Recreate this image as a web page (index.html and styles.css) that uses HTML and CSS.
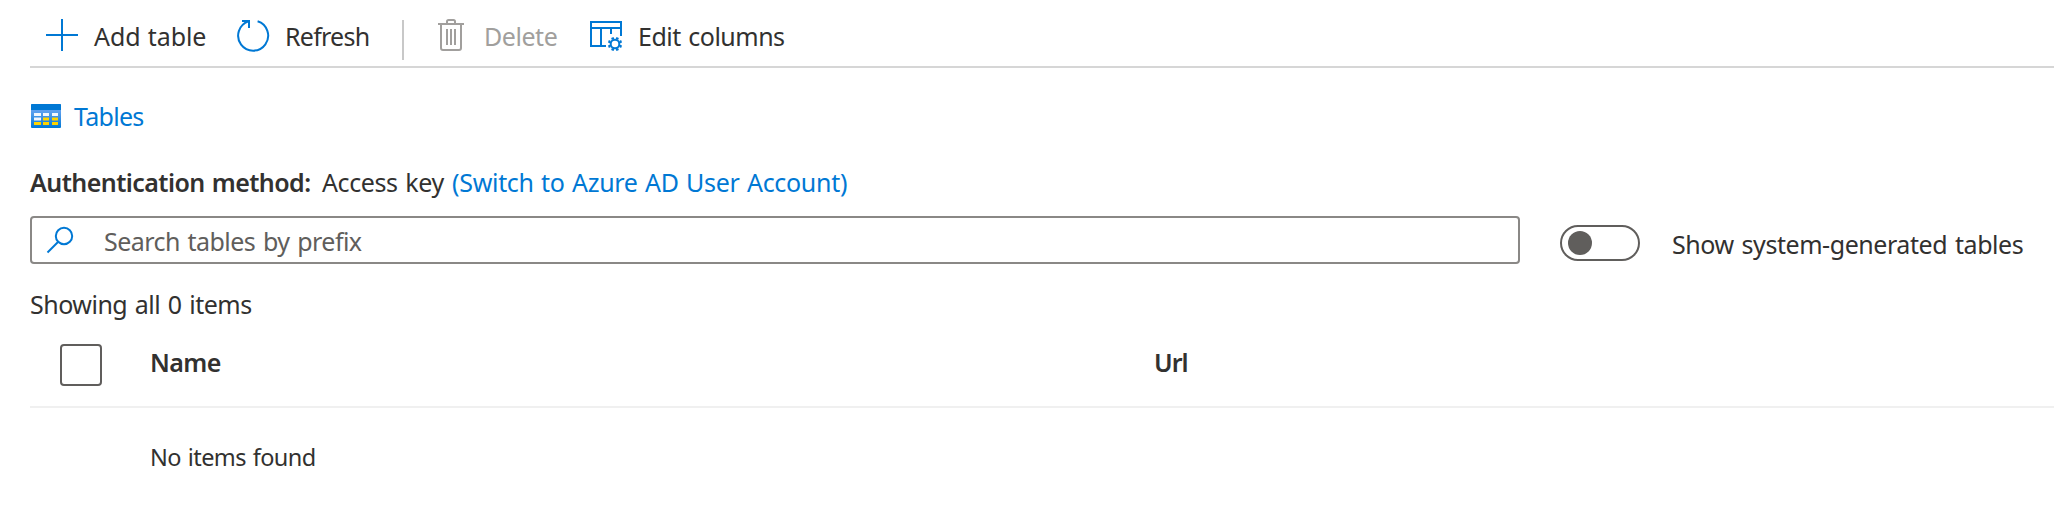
FILE: index.html
```
<!DOCTYPE html>
<html lang="en">
<head>
<meta charset="utf-8">
<title>Tables</title>
<link rel="stylesheet" href="styles.css">
</head>
<body>
<main class="page">
  <nav class="toolbar">
    <button class="command command-add">
      <svg class="icon" width="32" height="32" viewBox="0 0 32 32"><path d="M16 0v32M0 16h32"/></svg>
      <span class="label-add">Add table</span>
    </button>
    <button class="command command-refresh">
      <svg class="icon" width="34" height="34" viewBox="0 0 34 34"><path d="M20.6 2.3A15 15 0 1 1 11.4 2.4M5 2h7v7"/></svg>
      <span class="label-refresh">Refresh</span>
    </button>
    <span class="separator"></span>
    <button class="command command-delete" disabled>
      <svg class="icon" width="26" height="32" viewBox="0 0 26 32"><path d="M0 5h26M9 5V2.5Q9 1 10.500 1h5Q17 1 17 2.500V5M3 5v24q0 2 2 2h16q2 0 2-2V5M9 10v16M13 10v16M17 10v16"/></svg>
      <span class="label-delete">Delete</span>
    </button>
    <button class="command command-columns">
      <svg class="icon" width="32" height="32" viewBox="0 0 32 32"><path d="M16 27H1V3h30v14M1 9h30M11 9v18M21 9v6"/><circle cx="25" cy="25" r="4.300"/><path class="teeth" d="M29.600 26.900l2 .8M26.900 29.600l.8 2M23.100 29.600l-.8 2M20.400 26.900l-2 .8M20.400 23.100l-2-.8M23.100 20.400l-.8-2M26.900 20.400l.8-2M29.600 23.100l2-.8"/></svg>
      <span class="label-columns">Edit columns</span>
    </button>
  </nav>

  <div class="breadcrumb">
    <svg width="30" height="24" viewBox="0 0 30 24">
      <defs><linearGradient id="body" x1="0" y1="0" x2="0" y2="1"><stop offset="0" stop-color="#5ea0ef"/><stop offset=".3" stop-color="#5ea0ef"/><stop offset="1" stop-color="#0078d4"/></linearGradient></defs>
      <rect width="30" height="24" rx="1" fill="url(#body)"/>
      <path d="M0 6V1q0-1 1-1h28q1 0 1 1v5z" fill="#0078d4"/>
      <path d="M3 9h7v3H3zM12 9h6v3h-6zM21 9h6v3h-6zM3 13.500h7v3H3z" fill="#f2f6fd"/>
      <path d="M12 13.500h6v3h-6zM21 13.500h6v3h-6zM3 18h7v3H3zM12 18h6v3h-6zM21 18h6v3h-6z" fill="#ffd400"/>
    </svg>
    <a class="link label-tables">Tables</a>
  </div>

  <div class="auth">
    <strong class="auth-title">Authentication method:</strong>
    <span class="auth-value">Access key</span>
    <a class="link auth-switch">(Switch to Azure AD User Account)</a>
  </div>

  <div class="filters">
    <div class="search">
      <svg class="icon" width="28" height="28" viewBox="0 0 28 28"><circle cx="18" cy="10" r="8.200"/><path d="M12 16L1.500 26.500"/></svg>
      <span class="placeholder">Search tables by prefix</span>
    </div>
    <div class="toggle"><span class="thumb"></span></div>
    <span class="toggle-label">Show system-generated tables</span>
  </div>

  <div class="count">Showing all 0 items</div>

  <div class="table-head">
    <span class="checkbox"></span>
    <span class="column-name">Name</span>
    <span class="column-url">Url</span>
  </div>
  <div class="empty">No items found</div>
</main>
</body>
</html>
```
FILE: styles.css
```
* { box-sizing: border-box; }
body {
  margin: 0;
  background: #fff;
  color: #323130;
  font: 25px/36px "Noto Sans", "Open Sans", sans-serif;
  white-space: nowrap;
  overflow: hidden;
}
.page { height: 518px; padding-left: 30px; }
svg { display: block; flex: none; }
.icon { fill: none; stroke: #0078d4; stroke-width: 2; }
.link { color: #0078d4; }

.toolbar {
  display: flex;
  align-items: flex-start;
  height: 68px;
  padding-left: 16px;
  border-bottom: 2px solid #d6d6d6;
}
.command {
  display: flex;
  align-items: flex-start;
  padding: 18px 0 0;
  border: 0;
  background: none;
  color: inherit;
  font: inherit;
  text-align: left;
}
.command .icon { margin-top: 1px; }
.command-add { width: 191px; gap: 16px; }
.command-refresh { width: 165px; gap: 14px; }
.command-delete { width: 152px; gap: 20px; color: #a19f9d; }
.command-delete .icon { stroke: #a19f9d; }
.command-columns { gap: 16px; }
.teeth { stroke-width: 2.6; }
.separator { width: 2px; height: 40px; margin: 20px 34px 0 0; background: #c8c8c8; }
.label-add { letter-spacing: -.1px; word-spacing: 1px; }
.label-refresh { letter-spacing: -.75px; }
.label-delete { letter-spacing: -.45px; }
.label-columns { letter-spacing: -.5px; word-spacing: 1.5px; }

.breadcrumb { display: flex; align-items: flex-start; gap: 13px; padding: 30px 0 0 1px; }
.breadcrumb svg { margin-top: 6px; }
.label-tables { letter-spacing: -.7px; }

.auth { display: flex; margin-top: 30px; }
.auth-title { width: 292px; font-weight: 600; letter-spacing: -.55px; word-spacing: 1px; }
.auth-value { width: 130px; letter-spacing: -.4px; word-spacing: 1.5px; }
.auth-switch { letter-spacing: -.3px; word-spacing: 1.2px; }

.filters { display: flex; align-items: flex-start; margin-top: 16px; }
.search {
  display: flex;
  align-items: flex-start;
  width: 1490px;
  height: 48px;
  padding: 5px 14px;
  gap: 30px;
  border: 2px solid #8a8886;
  border-radius: 4px;
}
.search .icon { margin-top: 3px; }
.placeholder { color: #605e5c; letter-spacing: -.55px; word-spacing: 1.8px; }
.toggle {
  width: 80px;
  height: 36px;
  margin: 9px 0 0 40px;
  padding: 4px 6px;
  border: 2px solid #605e5c;
  border-radius: 18px;
}
.thumb { display: block; width: 24px; height: 24px; border-radius: 50%; background: #605e5c; }
.toggle-label { margin: 10px 0 0 32px; letter-spacing: -.44px; word-spacing: 1.8px; }

.count { margin-top: 22px; letter-spacing: -.5px; word-spacing: 1.6px; }

.table-head {
  display: flex;
  align-items: flex-start;
  height: 64px;
  margin-top: 22px;
  padding-left: 30px;
  border-bottom: 2px solid #f0f0f0;
  font-weight: 600;
}
.checkbox { width: 42px; height: 42px; border: 2px solid #605e5c; border-radius: 4px; }
.column-name { width: 1004px; margin-left: 48px; letter-spacing: -.57px; }
.column-url { letter-spacing: -1px; }
.empty { padding: 31px 0 0 120px; font-size: 23.5px; letter-spacing: -.6px; word-spacing: 1.4px; }
```
